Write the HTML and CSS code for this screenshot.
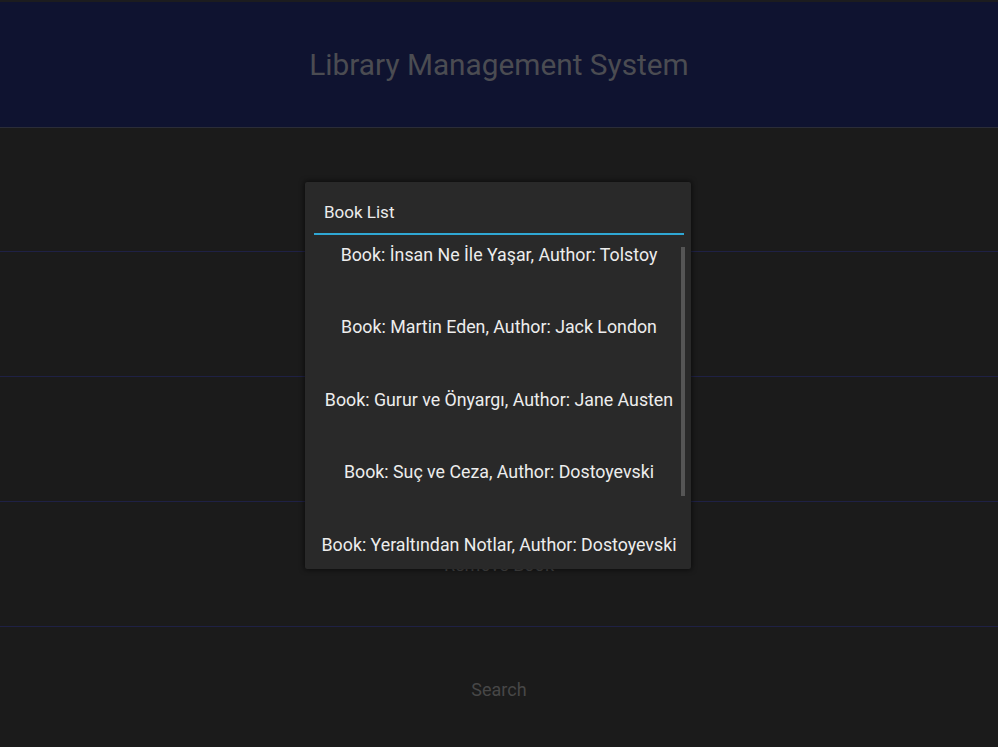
FILE: index.html
```html
<!DOCTYPE html>
<html lang="en">
<head>
<meta charset="utf-8">
<title>Library Management System</title>
<link rel="stylesheet" href="styles.css">
</head>
<body>
<div class="app">
  <div class="row header">Library Management System</div>
  <div class="row"></div>
  <div class="row"></div>
  <div class="row"></div>
  <div class="row">Remove Book</div>
  <div class="row last">Search</div>
</div>
<div class="popup">
  <div class="popup-title">Book List</div>
  <div class="popup-sep"></div>
  <div class="popup-list">
    <div class="list-inner">
      <div class="item">Book: İnsan Ne İle Yaşar, Author: Tolstoy</div>
      <div class="item">Book: Martin Eden, Author: Jack London</div>
      <div class="item">Book: Gurur ve Önyargı, Author: Jane Austen</div>
      <div class="item">Book: Suç ve Ceza, Author: Dostoyevski</div>
      <div class="item">Book: Yeraltından Notlar, Author: Dostoyevski</div>
    </div>
  </div>
  <div class="scrollbar"></div>
</div>
</body>
</html>
```
FILE: styles.css
```css
html, body {
  margin: 0;
  padding: 0;
}
body {
  width: 998px;
  height: 747px;
  overflow: hidden;
  background: #1b1b1b;
  font-family: Roboto, "Liberation Sans", sans-serif;
  position: relative;
}
.app {
  display: grid;
  grid-template-rows: 128px 124px 125px 125px 125px 1fr;
  height: 747px;
}
.row {
  display: flex;
  align-items: center;
  justify-content: center;
  box-sizing: border-box;
  background: #1b1b1b;
  border-bottom: 1px solid #1f2145;
  color: #474747;
  font-size: 18px;
}
.row.last {
  border-bottom: 0;
  padding-top: 4px;
}
.header {
  background: #0f1330;
  border-top: 2px solid #1c1c1f;
  border-bottom-color: #2b2d38;
  font-size: 29.8px;
  color: #4b4c52;
}
.popup {
  position: absolute;
  left: 305px;
  top: 182px;
  width: 386px;
  height: 387px;
  background: #292929;
  box-shadow: 0 0 5px 1px rgba(0, 0, 0, 0.55);
  border-radius: 2px;
  display: flex;
  flex-direction: column;
}
.popup-title {
  height: 51px;
  box-sizing: border-box;
  padding: 12px 0 0 19px;
  line-height: 36px;
  font-size: 17px;
  color: #ececec;
}
.popup-sep {
  height: 2px;
  margin: 0 7px 0 9px;
  background: #2fa7d4;
}
.popup-list {
  flex: 1;
  overflow: hidden;
  margin: 0 7px 1px 9px;
}
.list-inner {
  margin-top: -17px;
}
.item {
  height: 72.5px;
  display: flex;
  align-items: center;
  justify-content: center;
  font-size: 17.8px;
  color: #ededed;
  white-space: nowrap;
}
.scrollbar {
  position: absolute;
  left: 376px;
  top: 65px;
  width: 4px;
  height: 249px;
  background: #555555;
}
```
